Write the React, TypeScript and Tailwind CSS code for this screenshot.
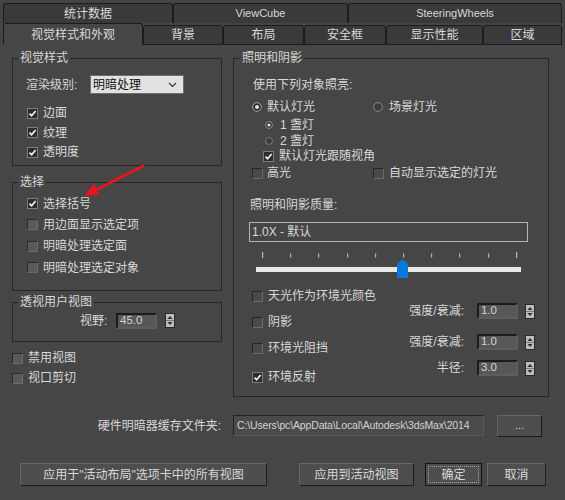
import React from "react";

const FONT = '"Liberation Sans", "Noto Sans CJK SC", sans-serif';

function Check({ on = false, dim = false }: { on?: boolean; dim?: boolean }) {
  return (
    <span
      className={
        on
          ? "inline-flex w-[11px] h-[11px] shrink-0 items-center justify-center bg-[#2c2c2c] border border-[#7c7c7c]"
          : dim
          ? "inline-flex w-[11px] h-[11px] shrink-0 bg-[#4a4a4a] border border-t-[#262626] border-l-[#262626] border-b-[#6a6a6a] border-r-[#6a6a6a]"
          : "inline-flex w-[11px] h-[11px] shrink-0 bg-[#5a5a5a] border border-t-[#2a2a2a] border-l-[#2a2a2a] border-b-[#6c6c6c] border-r-[#6c6c6c]"
      }
    >
      {on && (
        <svg width="9" height="9" viewBox="0 0 9 9">
          <path d="M1.5 4.6 L3.6 6.7 L7.6 2" fill="none" stroke="#f2f2f2" strokeWidth="1.7" />
        </svg>
      )}
    </span>
  );
}

function Radio({ on = false, size = 10 }: { on?: boolean; size?: number }) {
  return (
    <svg width={size} height={size} viewBox="0 0 10 10" className="shrink-0">
      <circle cx="5" cy="5" r="4.3" fill={on ? "#2c2c2c" : "#3a3a3a"} stroke={on ? "#a8a8a8" : "#8a8a8a"} strokeWidth="1" />
      {on && <circle cx="5" cy="5" r="2" fill="#e4e4e4" />}
    </svg>
  );
}

function Spinner() {
  return (
    <span className="inline-flex w-[10px] h-[15px] flex-col bg-[#bdbdbd] border border-[#2a2a2a]">
      <svg width="8" height="13" viewBox="0 0 8 13">
        <path d="M4 2 L6.5 5 L1.5 5 Z" fill="#303030" />
        <line x1="0" y1="6.5" x2="8" y2="6.5" stroke="#7a7a7a" strokeWidth="1" />
        <path d="M4 11 L6.5 8 L1.5 8 Z" fill="#303030" />
      </svg>
    </span>
  );
}

function NumInput({ value }: { value: string }) {
  return (
    <span className="inline-flex items-center w-[41px] h-[16px] bg-[#575757] border-2 border-t-[#1c1c1c] border-l-[#1c1c1c] border-b-[#5e5e5e] border-r-[#5e5e5e] pl-[2px] text-[#d4d4d4] text-[11.5px]">
      {value}
    </span>
  );
}

function Group({ title, className, children }: { title: string; className: string; children: React.ReactNode }) {
  return (
    <fieldset className={className}>
      <legend className="ml-[5px] px-[2px] leading-[14px]">{title}</legend>
      {children}
    </fieldset>
  );
}

function Btn({ className, children }: { className: string; children: React.ReactNode }) {
  return <div className={className}>{children}</div>;
}

export default function App() {
  const ticks = [13, 41, 69, 98, 126, 154, 182, 210, 239, 267];
  return (
    <div
      className="relative w-[565px] h-[500px] overflow-hidden bg-[#464646] text-[#d8d8d8] text-[12px] leading-none"
      style={{ fontFamily: FONT }}
    >
      {/* Tabs row 1 */}
      <div className="flex pl-[3px] pt-[3px] h-[23px] bg-[#444444]">
        <div className="w-[170px] h-[20px] flex items-center justify-center bg-[#3a3a3a] border border-b-0 border-[#1c1c1c] rounded-t-[3px]">统计数据</div>
        <div className="w-[175px] h-[20px] flex items-center justify-center bg-[#3a3a3a] border border-b-0 border-[#1c1c1c] rounded-t-[3px] text-[11px]">ViewCube</div>
        <div className="w-[214px] h-[20px] flex items-center justify-center bg-[#3a3a3a] border border-b-0 border-[#1c1c1c] rounded-t-[3px] text-[11px]">SteeringWheels</div>
      </div>
      {/* Tabs row 2 */}
      <div className="flex items-end pl-[3px] h-[22px] bg-[#444444]">
        <div className="w-[140px] h-[22px] flex items-center justify-center bg-[#464646] border border-b-0 border-[#1c1c1c] rounded-t-[3px]">视觉样式和外观</div>
        <div className="w-[80px] h-[20px] flex items-center justify-center bg-[#3a3a3a] border border-[#1c1c1c] rounded-t-[3px]">背景</div>
        <div className="w-[81px] h-[20px] flex items-center justify-center bg-[#3a3a3a] border border-[#1c1c1c] rounded-t-[3px]">布局</div>
        <div className="w-[82px] h-[20px] flex items-center justify-center bg-[#3a3a3a] border border-[#1c1c1c] rounded-t-[3px]">安全框</div>
        <div className="w-[97px] h-[20px] flex items-center justify-center bg-[#3a3a3a] border border-[#1c1c1c] rounded-t-[3px]">显示性能</div>
        <div className="w-[79px] h-[20px] flex items-center justify-center bg-[#3a3a3a] border border-[#1c1c1c] rounded-t-[3px]">区域</div>
      </div>

      {/* Main content */}
      <div className="flex pl-[12px]">
        {/* Left column */}
        <div className="w-[210px] flex flex-col">
          <Group title="视觉样式" className="mt-[6px] border border-[#262626] pb-[3px]">
            <div className="mt-[10px] h-[19px] flex items-center pl-[13px]">
              <span className="w-[64px]">渲染级别:</span>
              <div className="w-[94px] h-[19px] flex items-center justify-between bg-[#e2e2e2] border border-[#6e6e6e] pl-[2px] pr-[6px] text-[#111]">
                <span>明暗处理</span>
                <svg width="9" height="6" viewBox="0 0 9 6">
                  <path d="M1 1 L4.5 4.5 L8 1" fill="none" stroke="#333" strokeWidth="1.1" />
                </svg>
              </div>
            </div>
            <div className="mt-[9.5px] h-[19.5px] flex items-center pl-[14px] gap-[5px]"><Check on />边面</div>
            <div className="h-[19.5px] flex items-center pl-[14px] gap-[5px]"><Check on />纹理</div>
            <div className="h-[19.5px] flex items-center pl-[14px] gap-[5px]"><Check on />透明度</div>
          </Group>

          <Group title="选择" className="mt-[9px] border border-[#262626] pb-[12px]">
            <div className="mt-[4px] h-[21.33px] flex items-center pl-[14px] gap-[5px]"><Check on />选择括号</div>
            <div className="h-[21.33px] flex items-center pl-[14px] gap-[5px]"><Check />用边面显示选定项</div>
            <div className="h-[21.33px] flex items-center pl-[14px] gap-[5px]"><Check />明暗处理选定面</div>
            <div className="h-[21.33px] flex items-center pl-[14px] gap-[5px]"><Check />明暗处理选定对象</div>
          </Group>

          <Group title="透视用户视图" className="mt-[4px] border border-[#262626] pb-[13px]">
            <div className="mt-[4px] h-[15px] flex items-center pl-[67px]">
              <span className="w-[36px]">视野:</span>
              <NumInput value="45.0" />
              <span className="ml-[8px] flex"><Spinner /></span>
            </div>
          </Group>

          <div className="mt-[6px] h-[20px] flex items-center gap-[5px]"><Check />禁用视图</div>
          <div className="h-[20px] flex items-center gap-[5px]"><Check />视口剪切</div>
        </div>

        {/* Right group */}
        <fieldset className="ml-[11px] mt-[6px] w-[316px] border border-[#262626]">
          <legend className="ml-[6px] px-[2px] leading-[14px]">照明和阴影</legend>
          <div className="mt-[12px] h-[16px] flex items-center pl-[19px]">使用下列对象照亮:</div>
          <div className="mt-[6px] h-[16px] flex items-center pl-[18px]">
            <div className="w-[121px] flex items-center gap-[5px]"><Radio on />默认灯光</div>
            <div className="flex items-center gap-[6px]"><Radio />场景灯光</div>
          </div>
          <div className="mt-[2px] h-[16px] flex items-center pl-[31px] gap-[7px]"><Radio on size={8} />1 盏灯</div>
          <div className="h-[16px] flex items-center pl-[31px] gap-[7px]"><Radio size={8} />2 盏灯</div>
          <div className="h-[14px] flex items-center pl-[29px] gap-[5px]"><Check on />默认灯光跟随视角</div>
          <div className="mt-[2px] h-[16px] flex items-center pl-[18px]">
            <div className="w-[121px] flex items-center gap-[4px]"><Check dim />高光</div>
            <div className="flex items-center gap-[5px]"><Check dim />自动显示选定的灯光</div>
          </div>
          <div className="mt-[16px] h-[16px] flex items-center pl-[16px]">照明和阴影质量:</div>
          <div className="mt-[9px] ml-[15px] w-[279px] h-[20px] flex items-center pl-[2px] border border-[#b4b4b4]">1.0X - 默认</div>
          <svg className="block mt-[8px] ml-[15px]" width="279" height="30" viewBox="0 0 279 30">
            {ticks.map((x, i) => (
              <rect key={x} x={x} y={i === 0 || i === ticks.length - 1 ? 2 : 3.5} width="1.2" height={i === 0 || i === ticks.length - 1 ? 6 : 4} fill="#b8b8b8" />
            ))}
            <rect x="7" y="17" width="265" height="5" fill="#e8e8e8" />
            <path d="M148 14 L153.5 9 L159 14 L159 28 L148 28 Z" fill="#0a78d8" />
          </svg>
          <div className="mt-[8px] flex pr-[13px]">
            <div className="flex flex-col pl-[18px] pb-[11px]">
              <div className="h-[16px] flex items-center gap-[5px]"><Check dim />天光作为环境光颜色</div>
              <div className="mt-[10px] h-[16px] flex items-center gap-[5px]"><Check dim />阴影</div>
              <div className="mt-[10px] h-[16px] flex items-center gap-[5px]"><Check dim />环境光阻挡</div>
              <div className="mt-[13px] h-[16px] flex items-center gap-[5px]"><Check on />环境反射</div>
            </div>
            <div className="ml-auto flex flex-col">
              <div className="mt-[15px] h-[16px] flex items-center justify-end">
                <span>强度/衰减:</span>
                <span className="ml-[13px] flex"><NumInput value="1.0" /></span>
                <span className="ml-[7px] flex"><Spinner /></span>
              </div>
              <div className="mt-[15px] h-[16px] flex items-center justify-end">
                <span>强度/衰减:</span>
                <span className="ml-[13px] flex"><NumInput value="1.0" /></span>
                <span className="ml-[7px] flex"><Spinner /></span>
              </div>
              <div className="mt-[10px] h-[16px] flex items-center justify-end">
                <span>半径:</span>
                <span className="ml-[13px] flex"><NumInput value="3.0" /></span>
                <span className="ml-[7px] flex"><Spinner /></span>
              </div>
            </div>
          </div>
        </fieldset>
      </div>

      {/* Cache folder row */}
      <div className="mt-[18px] h-[21px] flex items-center">
        <div className="w-[221px] text-right pt-[1px]">硬件明暗器缓存文件夹:</div>
        <div className="ml-[12px] w-[251px] h-[21px] flex items-center pl-[3px] bg-[#4a4a4a] border border-t-[#222] border-l-[#222] border-b-[#5a5a5a] border-r-[#5a5a5a] text-[10.5px] tracking-[-0.15px] text-[#d2d2d2] whitespace-nowrap overflow-hidden">
          C:\Users\pc\AppData\Local\Autodesk\3dsMax\2014
        </div>
        <Btn className="ml-[13px] w-[45px] h-[22px] flex items-center justify-center bg-[#4e4e4e] border border-t-[#666] border-l-[#666] border-b-[#1c1c1c] border-r-[#1c1c1c] text-[11px]">...</Btn>
      </div>

      {/* Buttons row */}
      <div className="mt-[27px] h-[23px] flex">
        <Btn className="ml-[20px] w-[247px] h-[23px] flex items-center justify-center bg-[#4e4e4e] border border-t-[#666] border-l-[#666] border-b-[#1c1c1c] border-r-[#1c1c1c]">应用于"活动布局"选项卡中的所有视图</Btn>
        <Btn className="ml-[32px] w-[115px] h-[23px] flex items-center justify-center bg-[#4e4e4e] border border-t-[#666] border-l-[#666] border-b-[#1c1c1c] border-r-[#1c1c1c]">应用到活动视图</Btn>
        <Btn className="ml-[11px] w-[57px] h-[23px] p-[2px] bg-[#4e4e4e] border border-[#141414]">
          <div className="w-full h-full flex items-center justify-center border border-dotted border-[#a0a0a0]">确定</div>
        </Btn>
        <Btn className="ml-[5px] w-[59px] h-[23px] flex items-center justify-center bg-[#4e4e4e] border border-t-[#666] border-l-[#666] border-b-[#1c1c1c] border-r-[#1c1c1c]">取消</Btn>
      </div>

      {/* Red annotation arrow */}
      <svg className="absolute left-0 top-0 pointer-events-none" width="565" height="500" viewBox="0 0 565 500">
        <line x1="143" y1="166" x2="96" y2="190" stroke="#e8161b" strokeWidth="2.6" strokeLinecap="round" />
        <path d="M84 196 L99.5 194.5 L94 183.5 Z" fill="#e8161b" />
      </svg>
    </div>
  );
}
